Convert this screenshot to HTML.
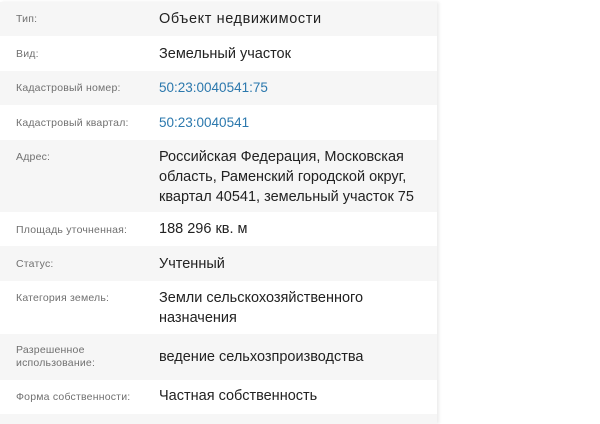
<!DOCTYPE html>
<html><head><meta charset="utf-8"><style>
body{margin:0;width:600px;height:419px;overflow:hidden;background:#fff;font-family:"Liberation Sans","DejaVu Sans",sans-serif;}
.t{position:absolute;left:0;top:2px;width:437px;box-shadow:2px 0 3px rgba(0,0,0,0.08);}
.r{position:relative;}
.r.g{background:#f6f6f6;}
.l{position:absolute;left:16px;font-size:10.5px;color:#707070;line-height:13px;letter-spacing:0.2px;}
.v{position:absolute;left:159px;font-size:14.5px;color:#222;line-height:20px;}
a{color:#2b78ad;text-decoration:none;}
</style></head><body>
<div class="t">
<div class="r g" style="height:34px"><div class="l" style="top:11px">Тип:</div><div class="v" style="top:7px;letter-spacing:0.6px">Объект недвижимости</div></div>
<div class="r" style="height:35px"><div class="l" style="top:12px">Вид:</div><div class="v" style="top:8px">Земельный участок</div></div>
<div class="r g" style="height:34px"><div class="l" style="top:11px">Кадастровый номер:</div><div class="v" style="top:7px;font-size:13.5px"><a>50:23:0040541:75</a></div></div>
<div class="r" style="height:35px"><div class="l" style="top:12px">Кадастровый квартал:</div><div class="v" style="top:8px;font-size:13.5px"><a>50:23:0040541</a></div></div>
<div class="r g" style="height:72px"><div class="l" style="top:11px">Адрес:</div><div class="v" style="top:7px;white-space:nowrap">Российская Федерация, Московская<br>область, Раменский городской округ,<br>квартал 40541, земельный участок 75</div></div>
<div class="r" style="height:34px"><div class="l" style="top:12px">Площадь уточненная:</div><div class="v" style="top:7px">188 296 кв. м</div></div>
<div class="r g" style="height:35px"><div class="l" style="top:12px">Статус:</div><div class="v" style="top:8px">Учтенный</div></div>
<div class="r" style="height:53px"><div class="l" style="top:11px">Категория земель:</div><div class="v" style="top:7px">Земли сельскохозяйственного<br>назначения</div></div>
<div class="r g" style="height:46px"><div class="l" style="top:10px">Разрешенное<br>использование:</div><div class="v" style="top:13px">ведение сельхозпроизводства</div></div>
<div class="r" style="height:34px"><div class="l" style="top:11px">Форма собственности:</div><div class="v" style="top:6px">Частная собственность</div></div>
<div class="r g" style="height:10px"></div>
</div>
</body></html>
